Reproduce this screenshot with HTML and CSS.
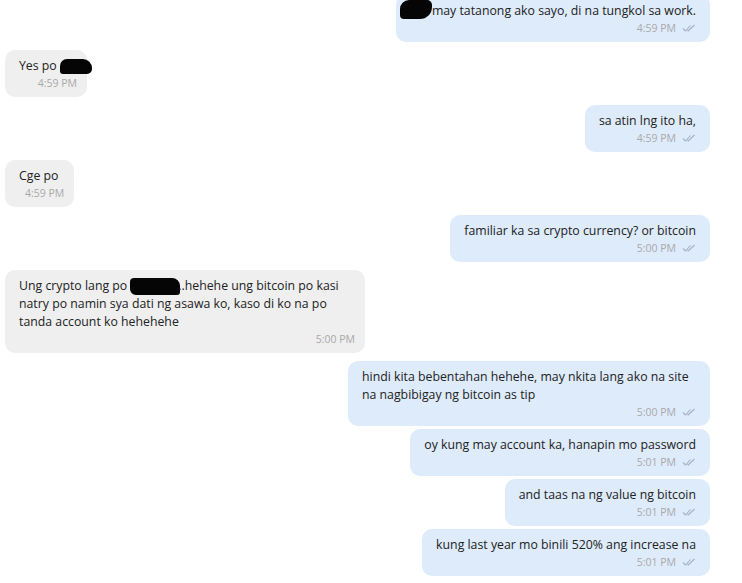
FILE: index.html
```html
<!DOCTYPE html>
<html>
<head>
<meta charset="utf-8">
<link rel="stylesheet" href="styles.css">
</head>
<body>
<div class="chat">
  <div class="msg out first">
    <div class="text"><span class="redact r1"></span>may tatanong ako sayo, di na tungkol sa work.</div>
    <div class="meta">4:59 PM <svg class="chk" viewBox="0 0 14 8"><path d="M1 4.5 L3.5 7 L8.5 1.5 M5.5 6.2 L6.2 7 L12.5 1" fill="none" stroke="#a3b2c2" stroke-width="1.1"/></svg></div>
  </div>

  <div class="msg in switch">
    <div class="text">Yes po <span class="redact r2"></span></div>
    <div class="meta">4:59 PM</div>
  </div>

  <div class="msg out switch">
    <div class="text">sa atin lng ito ha,</div>
    <div class="meta">4:59 PM <svg class="chk" viewBox="0 0 14 8"><path d="M1 4.5 L3.5 7 L8.5 1.5 M5.5 6.2 L6.2 7 L12.5 1" fill="none" stroke="#a3b2c2" stroke-width="1.1"/></svg></div>
  </div>

  <div class="msg in switch">
    <div class="text">Cge po</div>
    <div class="meta">4:59 PM</div>
  </div>

  <div class="msg out switch">
    <div class="text">familiar ka sa crypto currency? or bitcoin</div>
    <div class="meta">5:00 PM <svg class="chk" viewBox="0 0 14 8"><path d="M1 4.5 L3.5 7 L8.5 1.5 M5.5 6.2 L6.2 7 L12.5 1" fill="none" stroke="#a3b2c2" stroke-width="1.1"/></svg></div>
  </div>

  <div class="msg in switch wide">
    <div class="text">Ung crypto lang po<span class="redact r3"></span>..hehehe ung bitcoin po kasi natry po namin sya dati ng asawa ko, kaso di ko na po tanda account ko hehehehe</div>
    <div class="meta">5:00 PM</div>
  </div>

  <div class="msg out switch wide2">
    <div class="text">hindi kita bebentahan hehehe, may nkita lang ako na site na nagbibigay ng bitcoin as tip</div>
    <div class="meta">5:00 PM <svg class="chk" viewBox="0 0 14 8"><path d="M1 4.5 L3.5 7 L8.5 1.5 M5.5 6.2 L6.2 7 L12.5 1" fill="none" stroke="#a3b2c2" stroke-width="1.1"/></svg></div>
  </div>

  <div class="msg out">
    <div class="text">oy kung may account ka, hanapin mo password</div>
    <div class="meta">5:01 PM <svg class="chk" viewBox="0 0 14 8"><path d="M1 4.5 L3.5 7 L8.5 1.5 M5.5 6.2 L6.2 7 L12.5 1" fill="none" stroke="#a3b2c2" stroke-width="1.1"/></svg></div>
  </div>

  <div class="msg out">
    <div class="text">and taas na ng value ng bitcoin</div>
    <div class="meta">5:01 PM <svg class="chk" viewBox="0 0 14 8"><path d="M1 4.5 L3.5 7 L8.5 1.5 M5.5 6.2 L6.2 7 L12.5 1" fill="none" stroke="#a3b2c2" stroke-width="1.1"/></svg></div>
  </div>

  <div class="msg out">
    <div class="text">kung last year mo binili 520% ang increase na</div>
    <div class="meta">5:01 PM <svg class="chk" viewBox="0 0 14 8"><path d="M1 4.5 L3.5 7 L8.5 1.5 M5.5 6.2 L6.2 7 L12.5 1" fill="none" stroke="#a3b2c2" stroke-width="1.1"/></svg></div>
  </div>
</div>
</body>
</html>
```

FILE: styles.css
```css
html, body {
  margin: 0;
  padding: 0;
  background: #ffffff;
  height: 583px;
  overflow: hidden;
}
.chat {
  display: flex;
  flex-direction: column;
  gap: 3px;
  padding: 0 32px 0 5px;
  margin-top: -5px;
  font-family: "Open Sans", "Noto Sans", sans-serif;
  font-size: 12.3px;
  color: #222222;
}
.msg {
  border-radius: 10px;
  padding: 7px 14px 6px 14px;
  max-width: 332px;
  box-sizing: border-box;
}
.msg.switch {
  margin-top: 5px;
}
.msg.wide { max-width: 360px; }
.msg.wide2 { max-width: 362px; }
.msg.in {
  align-self: flex-start;
  background: #efefef;
  padding-right: 10px;
}
.msg.in .meta {
  padding-left: 6px;
}
.msg.out {
  align-self: flex-end;
  background: #deebfb;
}
.text {
  line-height: 18px;
}
.meta {
  line-height: 16px;
  font-size: 10.5px;
  color: #a9a9a9;
  text-align: right;
  display: flex;
  justify-content: flex-end;
  align-items: center;
  gap: 6px;
}
.chk {
  width: 14px;
  height: 8px;
}
.redact {
  display: inline-block;
  background: #050505;
  vertical-align: middle;
}
.r1 {
  width: 32px;
  height: 19px;
  margin-left: -10px;
  margin-top: -4px;
  border-radius: 9px 5px 12px 4px;
}
.r2 {
  width: 32px;
  height: 15px;
  margin-right: -15px;
  border-radius: 7px 9px 5px 3px;
}
.r3 {
  width: 50px;
  height: 17px;
  margin-left: 3px;
  margin-right: -2px;
  border-radius: 4px 8px 3px 6px;
}
```
